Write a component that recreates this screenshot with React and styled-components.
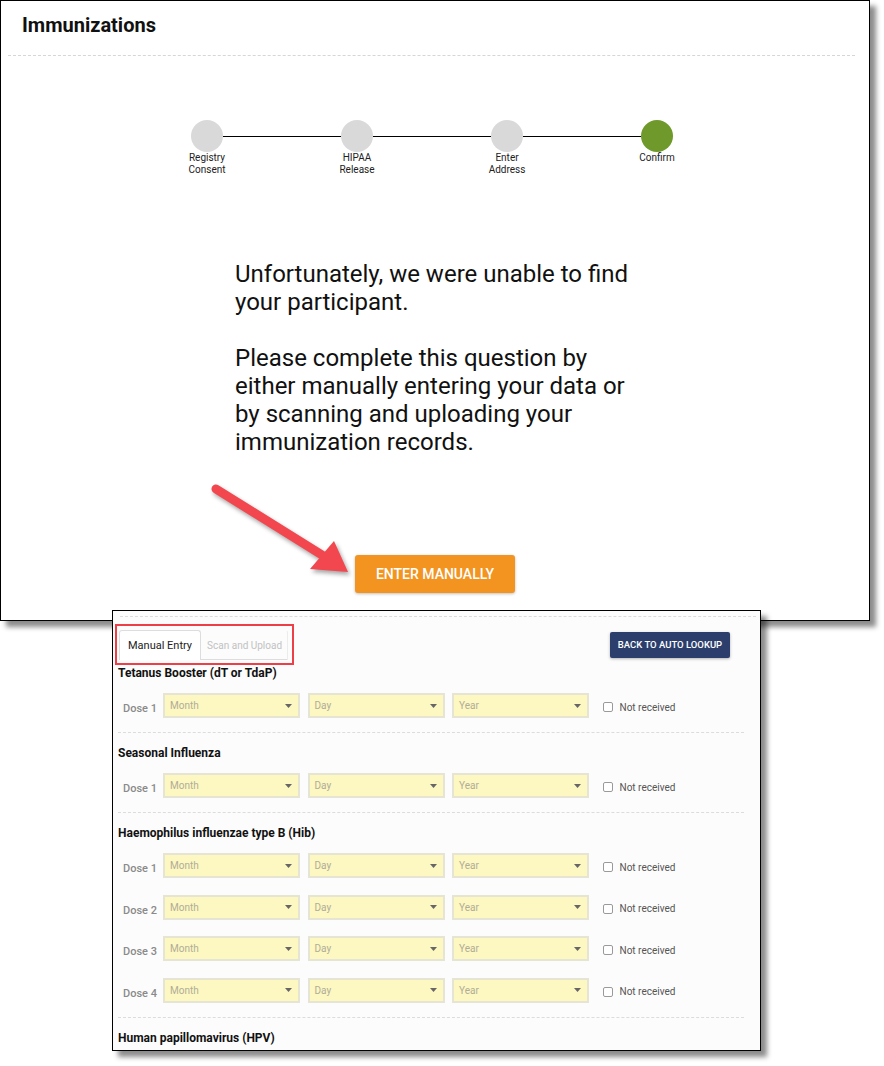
import React from "react";
import styled, { createGlobalStyle } from "styled-components";

const GlobalStyle = createGlobalStyle`
  body {
    margin: 0;
    background: #fff;
    font-family: Roboto, "Liberation Sans", sans-serif;
    color: #111;
  }
`;

// data
const steps = [
  { lines: ["Registry", "Consent"] },
  { lines: ["HIPAA", "Release"] },
  { lines: ["Enter", "Address"] },
  { lines: ["Confirm"], done: true },
];

// HPV doses fall below the crop of the screenshot
const vaccines = [
  { name: "Tetanus Booster (dT or TdaP)", doses: 1 },
  { name: "Seasonal Influenza", doses: 1 },
  { name: "Haemophilus influenzae type B (Hib)", doses: 4 },
  { name: "Human papillomavirus (HPV)", doses: 0 },
];

const Caret = () => (
  <svg width="7" height="4" viewBox="0 0 7 4">
    <path d="M0 0 L7 0 L3.5 4 Z" fill="#666" />
  </svg>
);

const Arrow = () => (
  <ArrowSvg width="884" height="1066" viewBox="0 0 884 1066">
    <line
      x1="216"
      y1="489"
      x2="322"
      y2="555"
      stroke="#f2474e"
      strokeWidth="9"
      strokeLinecap="round"
    />
    <polygon points="348,572 310,569 334,541" fill="#f2474e" />
  </ArrowSvg>
);

const App = () => {
  return (
    <Canvas>
      <GlobalStyle />
      <TopShot>
        <Header>
          <Title>Immunizations</Title>
        </Header>
        <Stepper>
          <Track>
            {steps.map((s, i) => (
              <React.Fragment key={i}>
                {i > 0 && <Connector />}
                <Dot $done={s.done} />
              </React.Fragment>
            ))}
          </Track>
          <Labels>
            {steps.map((s, i) => (
              <StepLabel key={i}>
                {s.lines.map((l) => (
                  <div key={l}>{l}</div>
                ))}
              </StepLabel>
            ))}
          </Labels>
        </Stepper>
        <Message>
          <p>Unfortunately, we were unable to find your participant.</p>
          <p>
            Please complete this question by either manually entering your
            data or by scanning and uploading your immunization records.
          </p>
        </Message>
        <EnterButton>Enter Manually</EnterButton>
      </TopShot>

      <BottomShot>
        <TopRule />
        <Toolbar>
          <Highlight>
            <TabList>
              <Tab $active>Manual Entry</Tab>
              <Tab>Scan and Upload</Tab>
            </TabList>
          </Highlight>
          <BackButton>Back to Auto Lookup</BackButton>
        </Toolbar>
        {vaccines.map((v, vi) => (
          <Section key={v.name} $last={vi === vaccines.length - 1}>
            <VaccineName>{v.name}</VaccineName>
            {v.doses > 0 && (
              <Doses>
                {Array.from({ length: v.doses }).map((_, d) => (
                  <DoseRow key={d}>
                    <DoseLabel>Dose {d + 1}</DoseLabel>
                    {["Month", "Day", "Year"].map((p) => (
                      <Select key={p}>
                        <span>{p}</span>
                        <Caret />
                      </Select>
                    ))}
                    <Check>
                      <Box />
                      Not received
                    </Check>
                  </DoseRow>
                ))}
              </Doses>
            )}
          </Section>
        ))}
      </BottomShot>
      <Arrow />
    </Canvas>
  );
};

export default App;

const Canvas = styled.div`
  position: relative;
  width: 884px;
  height: 1066px;
  overflow: hidden;
`;

const TopShot = styled.div`
  box-sizing: border-box;
  width: 870px;
  height: 621px;
  border: 1px solid #000;
  background: #fff;
  box-shadow: 6px 6px 5px rgba(0, 0, 0, 0.45);
`;

const Header = styled.div`
  margin: 0 14px 0 7px;
  padding: 12px 14px 18px;
  border-bottom: 1px dashed #d6d6d6;
`;

const Title = styled.h1`
  margin: 0;
  font-size: 20px;
  line-height: 24px;
  font-weight: 700;
  color: #111;
`;

const Stepper = styled.div`
  width: 510px;
  margin: 64px 0 0 176px;
`;

const Track = styled.div`
  display: flex;
  align-items: center;
  margin: 0 14px;
`;

const Dot = styled.div`
  width: 32px;
  height: 32px;
  border-radius: 50%;
  flex: none;
  background: ${(p) => (p.$done ? "#6f9a2b" : "#d9d9d9")};
`;

const Connector = styled.div`
  flex: 1;
  height: 1px;
  background: #000;
`;

const Labels = styled.div`
  display: flex;
  justify-content: space-between;
`;

const StepLabel = styled.div`
  width: 60px;
  text-align: center;
  font-size: 10px;
  line-height: 12px;
  color: #222;
`;

const Message = styled.div`
  width: 400px;
  margin: 84px auto 0;
  font-size: 24px;
  line-height: 28px;
  color: #111;

  p {
    margin: 0 0 28px;
  }
  p:last-child {
    margin-bottom: 0;
  }
`;

const EnterButton = styled.button`
  display: block;
  width: 160px;
  height: 38px;
  margin: 99px auto 0;
  border: none;
  border-radius: 3px;
  background: #f39320;
  color: #fff;
  font-family: Roboto, "Liberation Sans", sans-serif;
  font-size: 14px;
  font-weight: 500;
  text-transform: uppercase;
  box-shadow: 0 1px 3px rgba(0, 0, 0, 0.25);
`;

const BottomShot = styled.div`
  position: relative;
  box-sizing: border-box;
  width: 649px;
  height: 441px;
  margin: -11px 0 0 112px;
  border: 1px solid #000;
  background: #fcfcfc;
  overflow: hidden;
  box-shadow: 6px 6px 5px rgba(0, 0, 0, 0.45);
`;

const TopRule = styled.div`
  margin: 5px 4px 0 7px;
  border-top: 1px dashed #dcdcdc;
`;

const Toolbar = styled.div`
  display: flex;
  align-items: center;
  justify-content: space-between;
  margin-top: 7px;
  padding: 0 30px 0 2px;
`;

const Highlight = styled.div`
  border: 2px solid #ec3f47;
  padding: 4px 4px 3px 2px;
`;

const TabList = styled.div`
  display: flex;
  border-bottom: 1px solid #ddd;
`;

const Tab = styled.div`
  box-sizing: border-box;
  height: 30px;
  display: flex;
  align-items: center;
  padding: 0 ${(p) => (p.$active ? "8px" : "5px")};
  font-size: ${(p) => (p.$active ? "11px" : "10px")};
  color: ${(p) => (p.$active ? "#222" : "#c2c2c2")};
  background: ${(p) => (p.$active ? "#fff" : "transparent")};
  border: 1px solid ${(p) => (p.$active ? "#ddd" : "transparent")};
  border-bottom: none;
  border-radius: 3px 3px 0 0;
  margin-bottom: -1px;
  ${(p) => !p.$active && "border-right: 1px solid #ececec;"}
`;

const BackButton = styled.button`
  width: 120px;
  height: 26px;
  padding: 0;
  border: none;
  border-radius: 2px;
  background: #2c3f6c;
  color: #fff;
  font-family: Roboto, "Liberation Sans", sans-serif;
  font-size: 9.5px;
  font-weight: 500;
  text-transform: uppercase;
  box-shadow: 0 1px 3px rgba(0, 0, 0, 0.3);
`;

const Section = styled.div`
  margin: 0 16px 0 5px;
  padding: 1px 0 14px;
  border-bottom: ${(p) => (p.$last ? "none" : "1px dashed #dcdcdc")};
  & + & {
    padding-top: 13px;
  }
`;

const VaccineName = styled.div`
  font-size: 12px;
  line-height: 14px;
  font-weight: 700;
  color: #111;
`;

const Doses = styled.div`
  display: flex;
  flex-direction: column;
  gap: 16.5px;
  margin-top: 13px;
`;

const DoseRow = styled.div`
  display: flex;
  align-items: center;
  height: 25px;
  gap: 7.5px;
`;

const DoseLabel = styled.div`
  box-sizing: border-box;
  width: 45px;
  margin-right: -7.5px;
  padding: 6px 6px 0 0;
  text-align: right;
  font-size: 11px;
  font-weight: 500;
  color: #8a8a8a;
`;

const Select = styled.div`
  box-sizing: border-box;
  width: 137px;
  height: 25px;
  display: flex;
  align-items: center;
  justify-content: space-between;
  padding: 0 6px 0 5px;
  background: #fdf7c1;
  border: 2px solid #e6e4d2;
  font-size: 10px;
  color: #b0ad98;
`;

const Check = styled.label`
  display: flex;
  align-items: center;
  gap: 7px;
  margin-left: 6px;
  padding-top: 3px;
  font-size: 10px;
  color: #555;
`;

const Box = styled.span`
  box-sizing: border-box;
  width: 10px;
  height: 10px;
  border: 1px solid #9a9a9a;
  border-radius: 2px;
  background: #fff;
`;

const ArrowSvg = styled.svg`
  position: absolute;
  left: 0;
  top: 0;
  pointer-events: none;
  filter: drop-shadow(2px 3px 2px rgba(0, 0, 0, 0.35));
`;
